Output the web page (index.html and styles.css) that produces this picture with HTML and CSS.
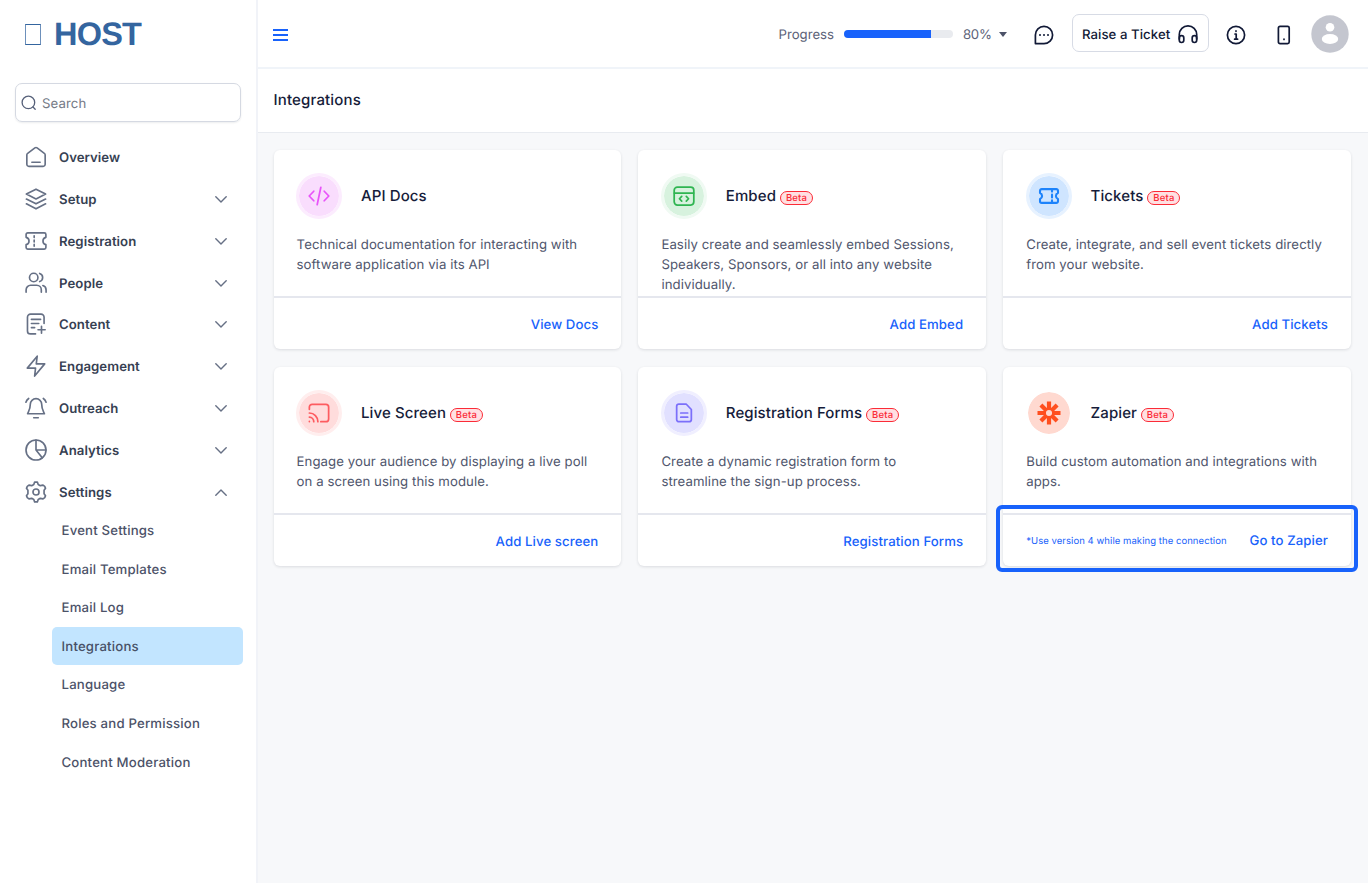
FILE: index.html
```html
<!DOCTYPE html>
<html lang="en">
<head>
<meta charset="utf-8">
<title>Integrations</title>
<link rel="stylesheet" href="styles.css">
</head>
<body>
<div class="app">
  <aside class="sidebar">
    <div class="logo"><span class="logo-mark"></span><span class="logo-text">HOST</span></div>
    <div class="search">
      <svg width="16" height="16" viewBox="0 0 16 16"><circle cx="7.4" cy="7.4" r="6.3"/><path d="M12 12l2.2 2.2"/></svg>
      <span>Search</span>
    </div>
    <nav class="nav">
      <a class="nav-item"><svg class="ico" viewBox="0 0 24 24"><path d="M2 9.8a2 2 0 0 1 .9-1.7l7.9-6a2 2 0 0 1 2.4 0l7.9 6a2 2 0 0 1 .9 1.7V20a2.2 2.2 0 0 1-2.2 2.2H4.2A2.2 2.2 0 0 1 2 20zM7.5 17.7h9"/></svg><span>Overview</span></a>
      <a class="nav-item"><svg class="ico" viewBox="0 0 24 24"><path d="M12 1.3L1.5 6.6 12 11.900l10.500-5.300zM1.500 12L12 17.300 22.500 12M1.500 17.300L12 22.700l10.500-5.400"/></svg><span>Setup</span><svg class="chev" viewBox="0 0 12 7"><path d="M.8.8L6 6l5.200-5.200"/></svg></a>
      <a class="nav-item"><svg class="ico" viewBox="0 0 24 24"><path d="M3 3.200h18a1.800 1.800 0 0 1 1.800 1.800v3a4.100 4.100 0 0 0 0 8v3a1.800 1.800 0 0 1-1.800 1.800H3A1.800 1.800 0 0 1 1.200 19v-3a4.100 4.100 0 0 0 0-8V5A1.800 1.800 0 0 1 3 3.200z"/><path d="M10 6.300v2M10 11v2M10 15.700v2"/></svg><span>Registration</span><svg class="chev" viewBox="0 0 12 7"><path d="M.8.8L6 6l5.200-5.200"/></svg></a>
      <a class="nav-item"><svg class="ico" viewBox="0 0 24 24"><circle cx="9.500" cy="6" r="4.600"/><path d="M1.200 22v-2.500a5 5 0 0 1 5-5h6.600a5 5 0 0 1 5 5V22M16 1.600a4.600 4.600 0 0 1 0 8.800M19.500 14.800a5 5 0 0 1 3.500 4.700V22"/></svg><span>People</span><svg class="chev" viewBox="0 0 12 7"><path d="M.8.8L6 6l5.200-5.200"/></svg></a>
      <a class="nav-item"><svg class="ico" viewBox="0 0 24 24"><path d="M20.800 11.500V4.500a3.300 3.300 0 0 0-3.300-3.300H6a3.300 3.300 0 0 0-3.300 3.300v15A3.300 3.300 0 0 0 6 22.800h5.500M7 7h10M7 11.500h8M7 16h3.500M18 14.500v7.500M14.200 18.300h7.800"/></svg><span>Content</span><svg class="chev" viewBox="0 0 12 7"><path d="M.8.8L6 6l5.200-5.200"/></svg></a>
      <a class="nav-item"><svg class="ico" viewBox="0 0 24 24"><path d="M13.300 1.300L2.500 14.300h9l-1 8.700L21.500 9.700h-9.200z"/></svg><span>Engagement</span><svg class="chev" viewBox="0 0 12 7"><path d="M.8.8L6 6l5.200-5.200"/></svg></a>
      <a class="nav-item"><svg class="ico" viewBox="0 0 24 24"><path d="M5.800 8a6.200 6.200 0 0 1 12.400 0c0 5.500 1.800 7.500 3 10.300H2.800C4 15.500 5.800 13.500 5.800 8zM9.500 22.600h5M1 5.700A8 8 0 0 1 4 1.600M23 5.700a8 8 0 0 0-3-4.100"/></svg><span>Outreach</span><svg class="chev" viewBox="0 0 12 7"><path d="M.8.8L6 6l5.200-5.200"/></svg></a>
      <a class="nav-item"><svg class="ico" viewBox="0 0 24 24"><circle cx="12" cy="12" r="10.900"/><path d="M12 1.100V12h10.900M12 12l6.800 8.500"/></svg><span>Analytics</span><svg class="chev" viewBox="0 0 12 7"><path d="M.8.8L6 6l5.200-5.200"/></svg></a>
      <a class="nav-item"><svg class="ico" viewBox="0 0 24 24"><path d="M9.600 3.800L10.500 1.200h3l.9 2.600 2.300 1.300 3-.6 1.800 1.300.9 2.200-1.600 2.200v3.600l1.600 2.200-.9 2.200-1.800 1.300-3-.6-2.300 1.300-.9 2.600h-3l-.9-2.600-2.300-1.300-3 .6-1.800-1.300-.9-2.200 1.600-2.200v-3.600L1.600 8l.9-2.200 1.800-1.300 3 .6z"/><circle cx="12" cy="12" r="3.300"/></svg><span>Settings</span><svg class="chev" viewBox="0 0 12 7"><path d="M.8 6.200L6 1l5.200 5.200"/></svg></a>
    </nav>
    <div class="subnav">
      <a>Event Settings</a>
      <a>Email Templates</a>
      <a>Email Log</a>
      <a class="active">Integrations</a>
      <a>Language</a>
      <a>Roles and Permission</a>
      <a>Content Moderation</a>
    </div>
  </aside>
  <div class="main">
    <header class="topbar">
      <div class="burger"><i></i><i></i><i></i></div>
      <div class="tools">
        <span class="progress-label">Progress</span>
        <div class="progress"><div class="progress-fill" style="width:80%"></div></div>
        <span class="progress-value">80%</span>
        <span class="caret"></span>
        <svg class="tool chat" width="20" height="20" viewBox="0 0 20 20"><path d="M1.400 18.600V10A8.600 8.600 0 1 1 10 18.600z"/><path class="dots" d="M6 10h.01M10 10h.01M14 10h.01"/></svg>
        <button class="ticket-btn"><span>Raise a Ticket</span>
          <svg class="tool" width="20" height="20" viewBox="0 0 20 20"><path d="M1.300 15V10.500a8.700 8.700 0 0 1 17.400 0V15"/><rect x="1.300" y="11.700" width="4.500" height="6.800" rx="2.200"/><rect x="14.200" y="11.700" width="4.500" height="6.800" rx="2.200"/></svg>
        </button>
        <svg class="tool info" width="20" height="20" viewBox="0 0 20 20"><circle cx="10" cy="10" r="8.600"/><path d="M9 9h1.200v5M8.600 14.200h3M10 5.900v.4"/></svg>
        <svg class="tool phone" width="14" height="20" viewBox="0 0 14 20"><rect x="1.400" y="1.400" width="10.800" height="17.200" rx="1.600"/><path d="M7 14v.4"/></svg>
        <svg class="avatar" width="38" height="38" viewBox="0 0 38 38"><circle cx="19" cy="19" r="18.700" fill="#c4c6cf"/><circle cx="19" cy="12.300" r="4.300" fill="#fff"/><ellipse cx="19" cy="24" rx="8.200" ry="5" fill="#fff"/></svg>
      </div>
    </header>
    <div class="page-title">Integrations</div>
    <section class="cards">
      <article class="card">
        <div class="card-body">
          <div class="card-head"><span class="badge-ico pink"><svg viewBox="0 0 24 24"><path d="M6.300 6.800L1.300 12l5 5.200M17.700 6.800l5 5.200-5 5.200M14 2.500L10 21.500"/></svg></span><h3>API Docs</h3></div>
          <p>Technical documentation for interacting with software application via its API</p>
        </div>
        <footer class="card-foot"><a>View Docs</a></footer>
      </article>
      <article class="card">
        <div class="card-body">
          <div class="card-head"><span class="badge-ico green"><svg viewBox="0 0 24 24"><rect x="1.300" y="2.300" width="21.400" height="19.600" rx="3.500"/><path d="M1.500 8.800h21M9.500 12.500L7 15l2.500 2.500M14.500 12.500L17 15l-2.500 2.500"/></svg></span><h3>Embed</h3><span class="beta">Beta</span></div>
          <p>Easily create and seamlessly embed Sessions, Speakers, Sponsors, or all into any website individually.</p>
        </div>
        <footer class="card-foot"><a>Add Embed</a></footer>
      </article>
      <article class="card">
        <div class="card-body">
          <div class="card-head"><span class="badge-ico blue"><svg viewBox="0 0 24 24"><path d="M4 4.500h16a1.800 1.800 0 0 1 1.800 1.800v2.500a3.400 3.400 0 0 0 0 6.400v2.500a1.800 1.800 0 0 1-1.800 1.800H4a1.800 1.800 0 0 1-1.800-1.800v-2.500a3.400 3.400 0 0 0 0-6.400V6.300A1.800 1.800 0 0 1 4 4.500z"/><path d="M15.300 4.500v2.700M15.300 10.500v3M15.300 16.800v2.700"/></svg></span><h3>Tickets</h3><span class="beta">Beta</span></div>
          <p>Create, integrate, and sell event tickets directly from your website.</p>
        </div>
        <footer class="card-foot"><a>Add Tickets</a></footer>
      </article>
      <article class="card">
        <div class="card-body">
          <div class="card-head"><span class="badge-ico red"><svg viewBox="0 0 24 24"><path d="M1.500 8V5.500a3 3 0 0 1 3-3h15a3 3 0 0 1 3 3v13a3 3 0 0 1-3 3H14M1.500 12a9.500 9.500 0 0 1 9.300 9.500M1.500 16.500a5 5 0 0 1 4.800 5M1.500 21.200v.1"/></svg></span><h3>Live Screen</h3><span class="beta">Beta</span></div>
          <p>Engage your audience by displaying a live poll on a screen using this module.</p>
        </div>
        <footer class="card-foot"><a>Add Live screen</a></footer>
      </article>
      <article class="card">
        <div class="card-body">
          <div class="card-head"><span class="badge-ico violet"><svg viewBox="0 0 24 24"><path d="M7 2.200h7.300l5.700 6V19a2.500 2.500 0 0 1-2.500 2.500H6.500A2.500 2.500 0 0 1 4 19V4.700a2.500 2.500 0 0 1 2.500-2.500zM8.500 12h7.500M8.500 16.500h7.500"/></svg></span><h3>Registration Forms</h3><span class="beta">Beta</span></div>
          <p>Create a dynamic registration form to streamline the sign-up process.</p>
        </div>
        <footer class="card-foot"><a>Registration Forms</a></footer>
      </article>
      <article class="card zapier">
        <div class="card-body">
          <div class="card-head"><span class="badge-ico orange"><svg viewBox="0 0 24 24"><path d="M12 .5v8M12 15.500v8M.5 12h8M15.500 12h8M3.900 3.900l5.500 5.500M14.600 14.600l5.500 5.500M3.900 20.100l5.500-5.500M14.600 9.400l5.500-5.500"/><circle cx="12" cy="12" r="4.300"/></svg></span><h3>Zapier</h3><span class="beta">Beta</span></div>
          <p>Build custom automation and integrations with apps.</p>
        </div>
        <footer class="card-foot"><small>*Use version 4 while making the connection</small><a>Go to Zapier</a></footer>
        <div class="highlight"></div>
      </article>
    </section>
  </div>
</div>
</body>
</html>
```
FILE: styles.css
```css
* { box-sizing: border-box; }
body { margin: 0; font-family: Inter, "Liberation Sans", sans-serif; font-size: 13.2px; letter-spacing: .07px; color: #4c5268; background: #f7f8fa; text-rendering: geometricPrecision; }
svg { fill: none; stroke: currentColor; stroke-linecap: round; stroke-linejoin: round; flex: none; }
.app { display: flex; height: 883px; overflow: hidden; }

.sidebar { width: 257.600px; flex: none; background: #fff; border-right: 2px solid #f1f3f8; }
.logo { display: flex; align-items: center; height: 68px; padding-left: 25px; color: #34659f; }
.logo-mark { width: 16px; height: 21px; border: 1px solid #6d90bb; border-top-color: #34659f; border-bottom-color: #34659f; margin-right: 13px; }
.logo-text { font: 700 32.500px/36px "Liberation Sans", Arial, sans-serif; letter-spacing: -.8px; }
.search { display: flex; align-items: center; gap: 5px; width: 226px; height: 39px; margin: 15px 0 0 15px; padding-left: 5px; border: 1px solid #d5d9e2; border-radius: 7px; box-shadow: 0 1px 2px #10182814; color: #757a86; }
.search svg { color: #566079; stroke-width: 1.3; }
.search span { padding-top: 2px; letter-spacing: .1px; }
.nav { padding: 14px 29px 0 25px; }
.nav-item { display: flex; align-items: center; height: 41.88px; color: #364052; font-weight: 600; letter-spacing: .05px; }
.nav-item span { padding-top: 2px; }
.ico { width: 22px; height: 22px; margin-right: 12px; color: #667085; stroke-width: 1.8; }
.chev { width: 12px; height: 7px; margin: 1px 0 0 auto; color: #667085; stroke-width: 1.4; }
.subnav { padding: 0 13px 0 52px; margin-top: -2px; }
.subnav a { display: flex; align-items: center; height: 38.6px; padding: 1.600px 0 0 9.500px; font-weight: 500; border-radius: 5px; letter-spacing: .18px; }
.subnav .active { background: #c2e5ff; color: #475066; }

.main { flex: 1; min-width: 0; }
.topbar { display: flex; align-items: center; justify-content: space-between; height: 69px; padding: 0 19px 0 15px; background: #fff; border-bottom: 2px solid #f0f4f9; }
.burger { display: flex; flex-direction: column; gap: 3px; padding-top: 2px; }
.burger i { width: 15px; height: 2px; background: #1862fb; }
.tools { display: flex; align-items: center; }
.progress-label { color: #5c6278; padding-top: 2px; letter-spacing: 0; }
.progress { width: 109px; height: 8px; margin: 0 10px; border-radius: 4px; background: #e9ebef; overflow: hidden; }
.progress-fill { height: 100%; background: #1862fb; }
.progress-value { color: #5c6278; width: 27px; padding-top: 2px; letter-spacing: -.3px; }
.caret { margin: 1px 27px 0 9px; border: 4.500px solid transparent; border-top: 5px solid #4c5268; border-bottom: 0; }
.tool { color: #111936; stroke-width: 1.7; position: relative; top: 1px; }
.chat .dots { stroke-width: 2; }
.ticket-btn { display: flex; align-items: center; gap: 8px; width: 137px; height: 38px; margin: -1px 17.500px 0 17.500px; padding: 0 0 0 9.500px; background: #fff; border: 1px solid #d7dbe5; border-radius: 7px; font: 500 13.2px Inter, sans-serif; letter-spacing: .05px; text-rendering: geometricPrecision; color: #111936; }
.ticket-btn span { padding-top: 3px; }
.info { margin-right: 31px; }
.phone { margin-right: 20px; }
.avatar { stroke: none; }
.page-title { height: 64px; padding: 0 16px; line-height: 62px; background: #fff; border-bottom: 1px solid #e8ebf0; color: #161c3a; font-size: 15px; font-weight: 500; letter-spacing: .15px; }

.cards { display: grid; grid-template-columns: repeat(3, 347.800px); grid-auto-rows: 199px; gap: 18px 17px; padding: 17px 0 0 16px; }
.card { display: flex; flex-direction: column; position: relative; background: #fff; border-radius: 6px; box-shadow: 0 1px 3px #1018281f; }
.card-body { height: 148px; padding: 23px 22px 0 23px; border-bottom: 2px solid #e5e7ee; }
.card-head { display: flex; align-items: center; height: 45px; }
.card h3 { margin: 0; font-size: 15px; font-weight: 500; letter-spacing: .1px; color: #161c3a; }
.badge-ico { display: flex; align-items: center; justify-content: center; width: 46px; height: 46px; margin: 0 19px 0 -.6px; border-radius: 50%; border: 3px solid; background-clip: padding-box; }
.badge-ico svg { width: 22px; height: 22px; stroke-width: 1.9; overflow: visible; }
.pink { background-color: #f9ddfd; border-color: #fcecfe; }
.green { background-color: #d7f2de; border-color: #f0faf3; }
.blue { background-color: #cfe5ff; border-color: #e7f2ff; }
.red { background-color: #ffdcdc; border-color: #ffeeee; }
.violet { background-color: #e1e0ff; border-color: #f0efff; }
.orange { background-color: #ffd9d0; border: 2px solid #fff; }
.pink svg { color: #e854fa; }
.green svg { color: #2fb551; }
.blue svg { color: #1d83fb; stroke-width: 2.300; }
.red svg { color: #fd5c60; }
.violet svg { color: #7b6ffa; }
.orange svg { width: 24px; height: 24px; stroke-width: 4.200; stroke-linecap: butt; color: #ff4f1f; }
.orange circle { stroke-width: 2.500; }
.beta { margin: 4px 0 0 4px; width: 33px; height: 14px; border: 1px solid #fb2b37; border-radius: 7px; background: #ffe0e2; color: #fb2b37; font-size: 9.500px; font-weight: 500; line-height: 14px; text-align: center; letter-spacing: .2px; }
.card p { margin: 17px 0 0; line-height: 20px; color: #50566d; }
.card-foot { display: flex; flex: 1; align-items: center; justify-content: flex-end; padding: 2px 23px 0 23px; color: #1862fb; }
.card-foot a { font-weight: 500; letter-spacing: .09px; }
.card-foot small { margin-right: auto; font-size: 9.500px; letter-spacing: .06px; }
.zapier .card-foot { padding-top: 1px; }
.highlight { position: absolute; left: -7px; right: -7px; bottom: -6px; height: 67px; border: 4px solid #1862fb; border-radius: 6px; }
```
